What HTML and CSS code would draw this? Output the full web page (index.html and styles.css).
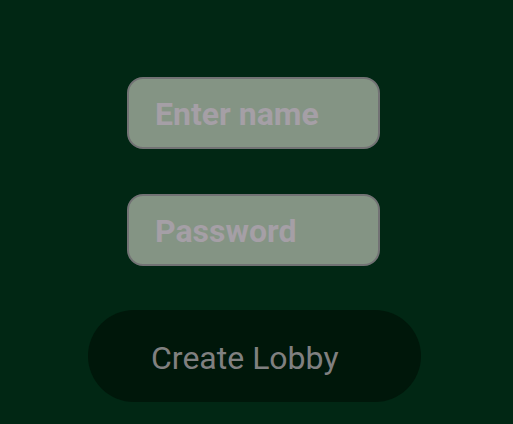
FILE: index.html
```html
<!DOCTYPE html>
<html>
<head>
<meta charset="utf-8">
<link rel="stylesheet" href="styles.css">
</head>
<body>
<main class="form">
  <div class="field"><input class="input" type="text" placeholder="Enter name"></div>
  <div class="field"><input class="input" type="password" placeholder="Password"></div>
  <button class="btn">Create Lobby</button>
</main>
</body>
</html>
```
FILE: styles.css
```css
html, body {
  margin: 0;
  padding: 0;
  background: #012714;
  height: 100%;
}
.form {
  display: flex;
  flex-direction: column;
  align-items: center;
  padding-top: 77px;
  padding-right: 6px;
}
.field {
  margin-bottom: 45px;
}
.input {
  box-sizing: border-box;
  width: 253px;
  height: 72px;
  border: 2px solid #727274;
  border-radius: 16px;
  background: #849484;
  padding: 2px 0 0 26px;
  font-family: Roboto, sans-serif;
  font-weight: 700;
  font-size: 32px;
  color: #a59fa6;
  outline: none;
}
.input::placeholder {
  color: #a59fa6;
  opacity: 1;
}
.btn {
  margin-top: -1px;
  margin-left: 2px;
  width: 333px;
  height: 92px;
  border: none;
  border-radius: 46px;
  background: #00170a;
  font-family: Roboto, sans-serif;
  font-weight: 400;
  font-size: 32px;
  color: #808080;
  text-align: left;
  padding: 3px 0 0 63px;
  cursor: pointer;
}
```
